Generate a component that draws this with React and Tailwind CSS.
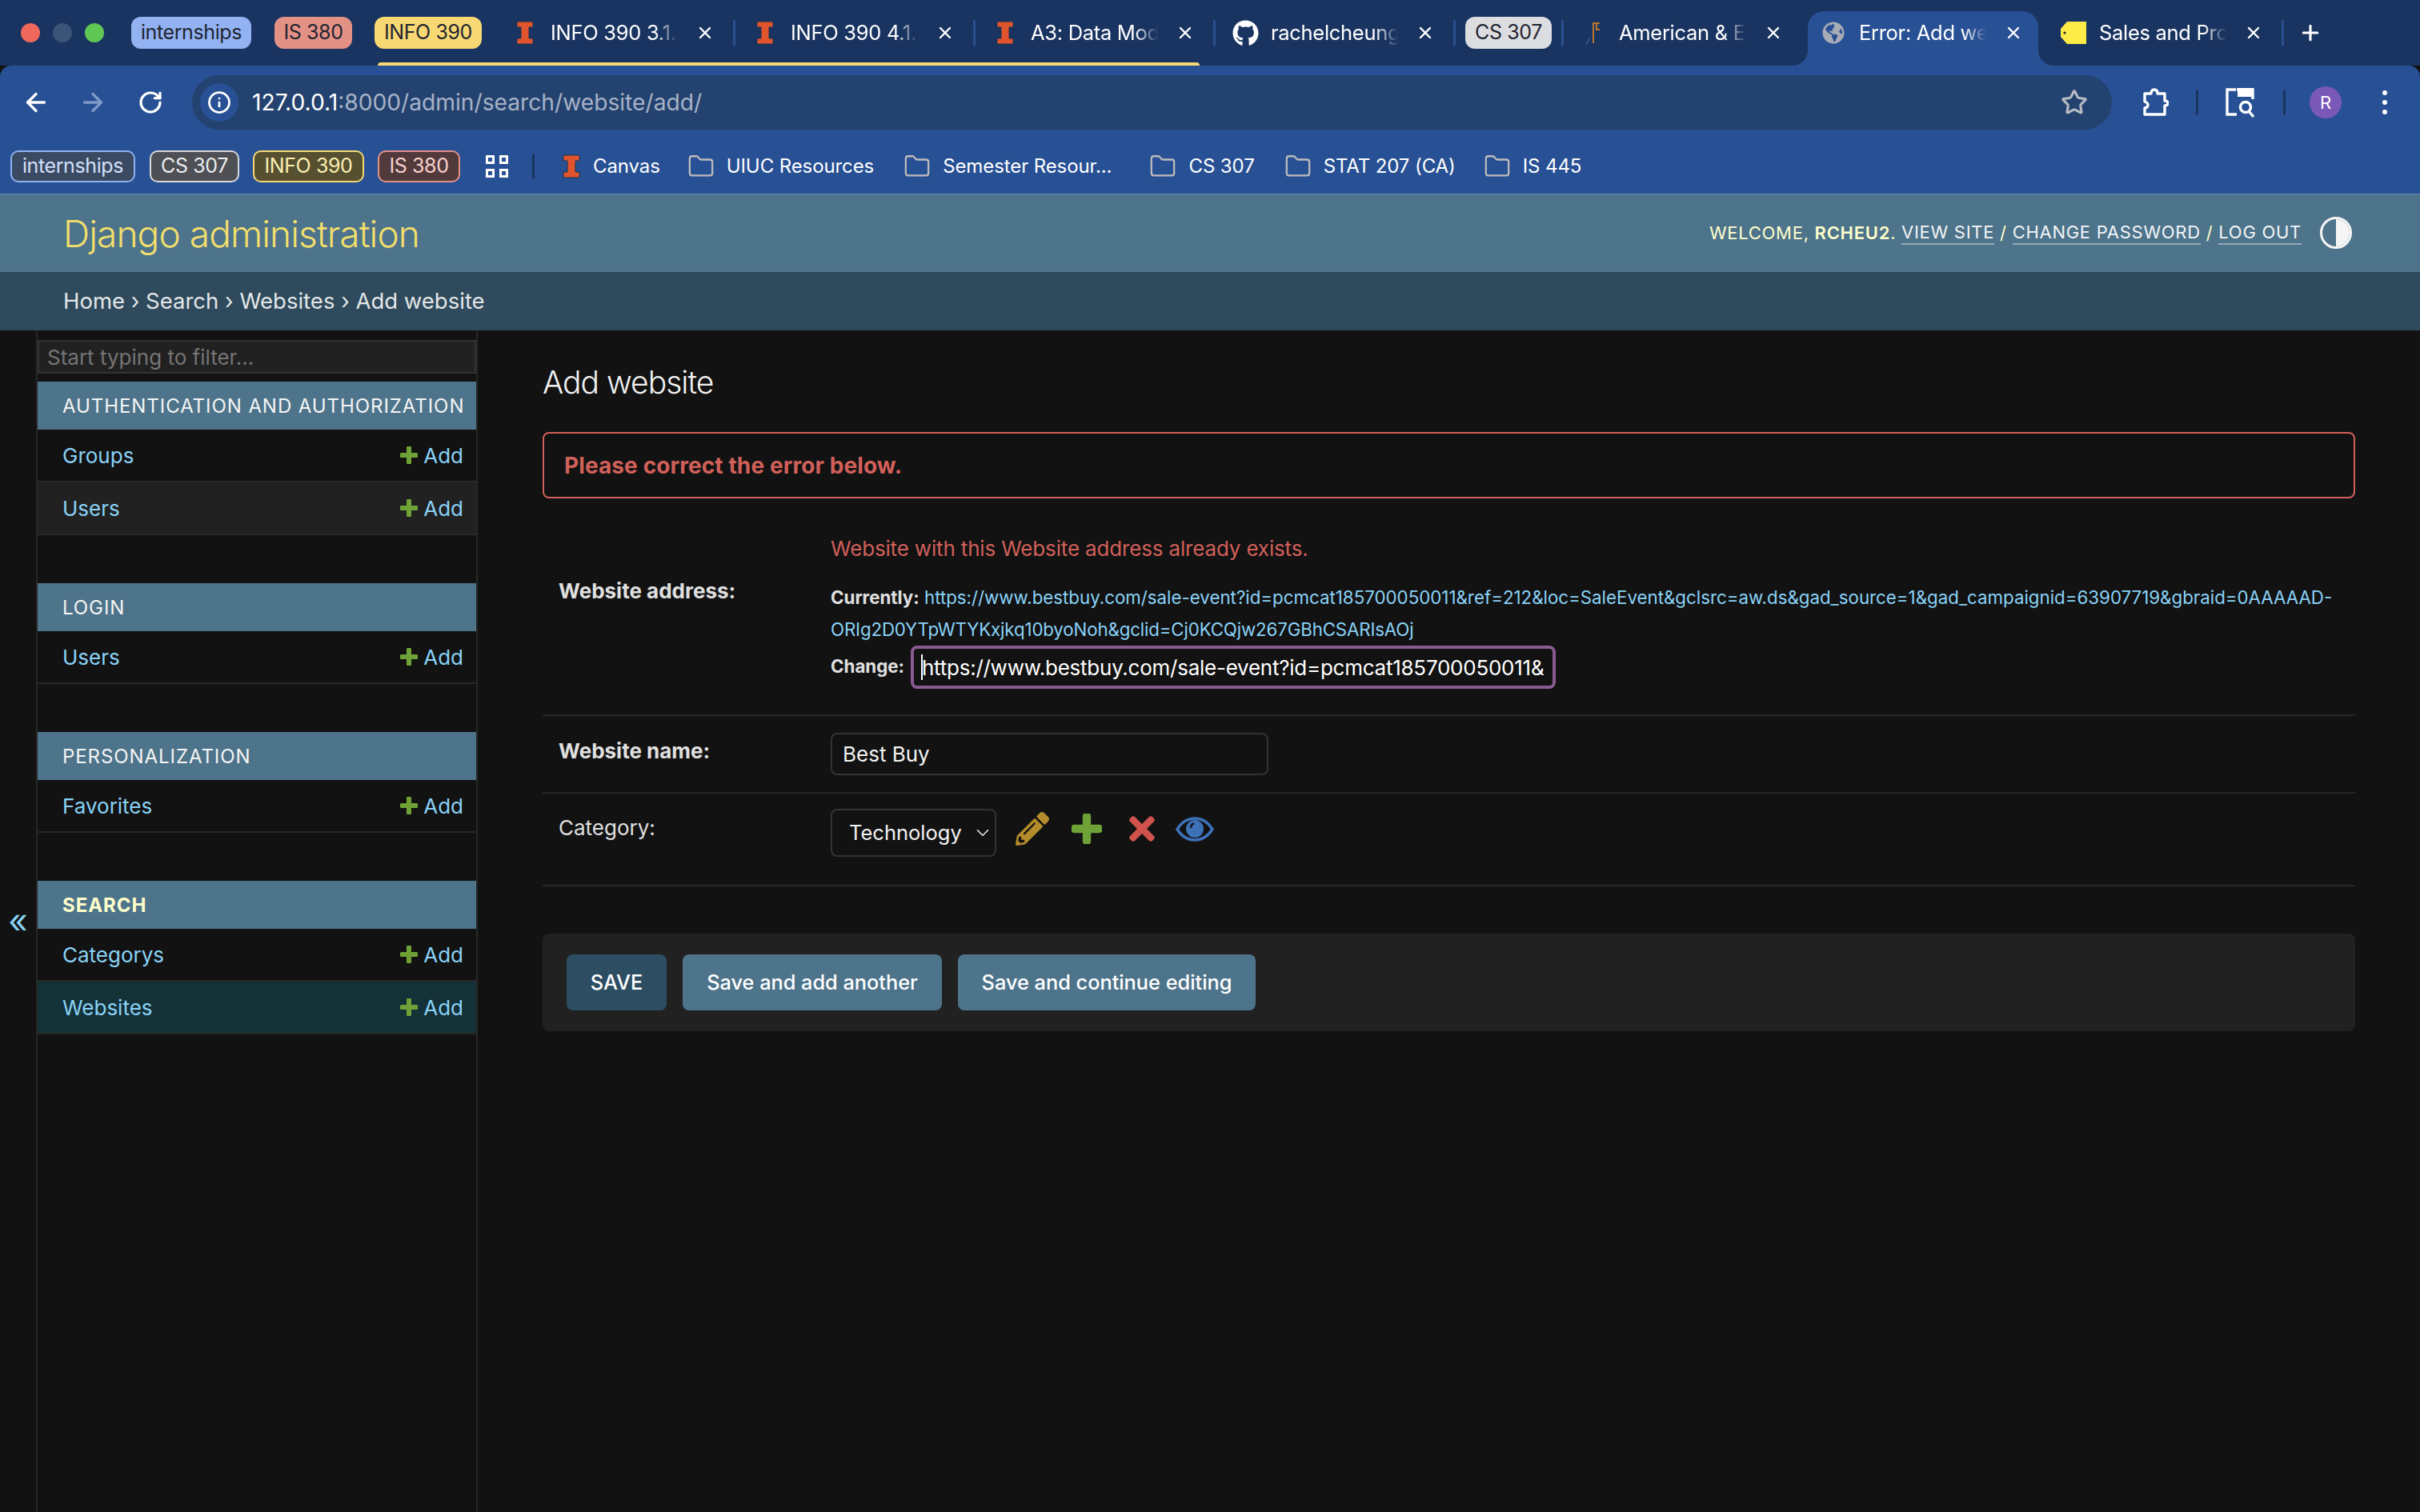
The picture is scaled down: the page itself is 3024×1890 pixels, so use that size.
import { ArrowLeft, ArrowRight, ChevronDown, Folder, Info, Plus, RotateCw, Star, X } from "lucide-react";
import { FaGithub, FaGlobeAmericas, FaPencilAlt, FaTimes } from "react-icons/fa";

// small favicons
const IllinoisI = ({ className = "" }) => (
  <svg viewBox="0 0 22 30" className={`w-[22px] h-[30px] shrink-0 ${className}`}>
    <path
      d="M1 1h20v7h-5v14h5v7H1v-7h5V8H1z"
      fill="#e0552e"
      stroke="#203050"
      strokeWidth="1"
    />
  </svg>
);

const TagIcon = () => (
  <svg viewBox="0 0 32 30" className="w-8 h-[30px] shrink-0">
    <path d="M8 1h24v28H8L0 20V10z" fill="#fdeb47" />
    <circle cx="5" cy="15" r="1.6" fill="#222" />
  </svg>
);

const AmericanIcon = () => (
  <svg viewBox="0 0 24 30" className="w-6 h-[30px] shrink-0">
    <path d="M12 28V3h8M12 3v25M16 3v8h4" fill="none" stroke="#b9752e" strokeWidth="2" />
    <path d="M3 29c2-2 3-3 4-7" fill="none" stroke="#3c5a86" strokeWidth="1.5" />
  </svg>
);

// django's green add icon, thick with rounded ends
const PlusIcon = ({ size }) => (
  <svg viewBox="0 0 22 22" style={{ width: size, height: size }} className="shrink-0">
    <path d="M11 2v18M2 11h18" stroke="#6fa236" strokeWidth="6" strokeLinecap="round" />
  </svg>
);

const Tab = ({ icon, title, active, sep = true }) => (
  <div className="relative flex items-center w-[298px] h-full shrink-0 pl-[25px]">
    {active && (
      <div className="absolute left-[5px] right-[5px] top-[14px] bottom-0 bg-[#285094] rounded-t-[20px]">
        <span className="absolute -left-5 bottom-0 w-5 h-5 bg-[radial-gradient(circle_at_0_0,transparent_20px,#285094_20.5px)]"></span>
        <span className="absolute -right-5 bottom-0 w-5 h-5 bg-[radial-gradient(circle_at_100%_0,transparent_20px,#285094_20.5px)]"></span>
      </div>
    )}
    <div className="relative flex items-center w-[24px] justify-center">{icon}</div>
    <span className="relative ml-5 w-[159px] overflow-hidden whitespace-nowrap text-[25.5px] tracking-[-0.3px] text-white [mask-image:linear-gradient(to_right,black_82%,transparent)]">
      {title}
    </span>
    <X className="relative ml-[22px] text-white" size={24} strokeWidth={2.4} />
    {sep && <span className="absolute -right-[2px] top-[25px] w-[3px] h-[33px] rounded bg-[#28508f]"></span>}
  </div>
);

const TabChip = ({ label, className, ml }) => (
  <div className={`flex items-center justify-center h-10 rounded-[12px] text-[25px] tracking-[-0.4px] text-[#1f2430] shrink-0 ${className} ${ml}`}>
    {label}
  </div>
);

const BarChip = ({ label, className }) => (
  <div className={`flex items-center justify-center h-10 rounded-[10px] border-2 text-[25px] tracking-[-0.4px] shrink-0 ${className}`}>
    {label}
  </div>
);

const Bookmark = ({ label, ml }) => (
  <div className={`flex items-center shrink-0 ${ml}`}>
    <Folder size={34} strokeWidth={1.6} className="text-[#bcbcbc]" />
    <span className="ml-[15px] text-[24px] tracking-[-0.1px] text-white whitespace-nowrap">{label}</span>
  </div>
);

const TabStrip = () => (
  <div className="flex items-center h-[82px] pl-[26px] bg-[#1a3461]">
    <span className="w-6 h-6 rounded-full bg-[#f0685c]"></span>
    <span className="w-6 h-6 ml-4 rounded-full bg-[#3b5478]"></span>
    <span className="w-6 h-6 ml-4 rounded-full bg-[#60c654]"></span>
    <TabChip label="internships" className="w-[150px] bg-[#92b2f2]" ml="ml-[34px]" />
    <TabChip label="IS 380" className="w-[97px] bg-[#e39185]" ml="ml-[29px]" />
    <div className="relative flex items-center h-full ml-7">
      <TabChip label="INFO 390" className="w-[134px] bg-[#f8d873]" ml="" />
      <div className="w-[17px]"></div>
      <Tab icon={<IllinoisI />} title="INFO 390 3.1.pdf" />
      <div className="w-[2px]"></div>
      <Tab icon={<IllinoisI />} title="INFO 390 4.1.pdf" />
      <div className="w-[2px]"></div>
      <Tab icon={<IllinoisI />} title="A3: Data Models" />
      <span className="absolute left-1 right-[18px] bottom-0 h-1 rounded-t bg-[#f8d873]"></span>
    </div>
    <div className="w-[2px]"></div>
    <Tab icon={<FaGithub className="text-white shrink-0" size={33} />} title="rachelcheungg" />
    <TabChip label="CS 307" className="w-[108px] bg-[#dcdde1]" ml="ml-[14px]" />
    <span className="w-[3px] h-[33px] ml-3 rounded bg-[#28508f]"></span>
    <Tab icon={<AmericanIcon />} title="American & Europe" sep={false} />
    <div className="w-[2px]"></div>
    <Tab icon={<FaGlobeAmericas className="text-[#a6abb5] shrink-0" size={28} />} title="Error: Add website" active sep={false} />
    <div className="w-[2px]"></div>
    <Tab icon={<TagIcon />} title="Sales and Promos" />
    <Plus className="ml-5 text-white shrink-0" size={30} strokeWidth={2.5} />
  </div>
);

const ToolbarDivider = () => <span className="block w-[3px] h-[32px] rounded bg-[#1a3461]"></span>;

const Toolbar = () => (
  <div className="bg-[#285094] rounded-t-[14px]">
    <div className="flex items-center h-[68px] mt-3">
      <ArrowLeft className="ml-[27px] text-white" size={36} strokeWidth={2.2} />
      <ArrowRight className="ml-[35px] text-[#7f9ac8]" size={36} strokeWidth={2.2} />
      <RotateCw className="ml-[38px] text-white" size={32} strokeWidth={2.4} />
      <div className="flex items-center w-[2399px] h-[68px] ml-[36px] pl-[10px] pr-[30px] rounded-full bg-[#24426f]">
        <div className="flex items-center justify-center w-12 h-12 rounded-full bg-[#285094]">
          <Info className="text-white" size={30} strokeWidth={2.2} />
        </div>
        <span className="ml-[17px] text-[28.200px] text-white">127.0.0.1</span>
        <span className="text-[28.200px] text-[#a7b3c7]">:8000/admin/search/website/add/</span>
        <Star className="ml-auto text-[#b6bbc4]" size={34} strokeWidth={2.2} />
      </div>
      <svg viewBox="0 0 34 36" className="w-[34px] h-9 ml-[37px]" fill="none" stroke="white" strokeWidth="3.4" strokeLinejoin="round">
        <path d="M4 7h8c0-3 1-5 4-5s4 2 4 5h9v9c2 0 4 1 4 3s-2 3-4 3v11H4v-8c3 0 4-2 4-4s-1-3-4-4z" />
      </svg>
      <div className="ml-[34px]"><ToolbarDivider /></div>
      <svg viewBox="0 0 38 40" className="w-[38px] h-10 ml-[33px]" fill="none">
        <path d="M14 4H3v31h12M15 4h20v12" stroke="white" strokeWidth="3.4" />
        <path d="M16 2h20v11H16z" fill="white" />
        <circle cx="26" cy="26" r="6.5" stroke="white" strokeWidth="3.4" />
        <path d="M30 31l6 7" stroke="white" strokeWidth="3.4" />
      </svg>
      <div className="ml-[35px]"><ToolbarDivider /></div>
      <div className="flex items-center justify-center w-10 h-10 ml-[30px] rounded-full bg-[#7a58b8] text-[22px] text-white">R</div>
      <div className="flex flex-col gap-[6px] ml-[51px]">
        <span className="w-[6px] h-[6px] rounded-full bg-white"></span>
        <span className="w-[6px] h-[6px] rounded-full bg-white"></span>
        <span className="w-[6px] h-[6px] rounded-full bg-white"></span>
      </div>
    </div>
    <div className="flex items-center h-10 mt-[26px] mb-[14px] pl-[13px]">
      <BarChip label="internships" className="w-[156px] border-[#8fb2f0] bg-[#3b4a63] text-[#d3e0fa]" />
      <BarChip label="CS 307" className="w-[112px] ml-[18px] border-[#d9d9d9] bg-[#4e5056] text-[#ececec]" />
      <BarChip label="INFO 390" className="w-[139px] ml-[17px] border-[#f6d872] bg-[#565030] text-[#fbeeb2]" />
      <BarChip label="IS 380" className="w-[103px] ml-[17px] border-[#e39185] bg-[#523a3c] text-[#f8d2cd]" />
      <div className="grid grid-cols-2 gap-[6px] ml-8 shrink-0">
        <span className="w-[11px] h-[11px] border-[3px] border-white"></span>
        <span className="w-[11px] h-[11px] border-[3px] border-white"></span>
        <span className="w-[11px] h-[11px] border-[3px] border-white"></span>
        <span className="w-[11px] h-[11px] border-[3px] border-white"></span>
      </div>
      <span className="w-[3px] h-[32px] ml-[30px] rounded bg-[#1a3461]"></span>
      <IllinoisI className="ml-[35px]" />
      <span className="ml-[16px] text-[24px] tracking-[-0.1px] text-white">Canvas</span>
      <Bookmark label="UIUC Resources" ml="ml-[34px]" />
      <Bookmark label="Semester Resour..." ml="ml-[37px]" />
      <Bookmark label="CS 307" ml="ml-[47px]" />
      <Bookmark label="STAT 207 (CA)" ml="ml-[37px]" />
      <Bookmark label="IS 445" ml="ml-[35px]" />
    </div>
  </div>
);

const Header = () => (
  <div className="flex items-center h-[98px] pl-[79px] pr-[85px] border-t-2 border-[#5b7da0] bg-[#4e748b]">
    <span className="text-[46px] font-light tracking-[-0.9px] text-[#f2df6b]">Django administration</span>
    <div className="flex items-center ml-auto pb-[2px] text-[22px] tracking-[0.72px] text-[#ffffcc]">
      <span>WELCOME,&nbsp;</span>
      <span className="font-semibold">RCHEU2</span>
      <span>.&nbsp;</span>
      <span className="border-b-2 border-[#93a9b8] text-[#f2f5f7] leading-[27px]">VIEW SITE</span>
      <span>&nbsp;/&nbsp;</span>
      <span className="border-b-2 border-[#93a9b8] text-[#f2f5f7] leading-[27px]">CHANGE PASSWORD</span>
      <span>&nbsp;/&nbsp;</span>
      <span className="border-b-2 border-[#93a9b8] text-[#f2f5f7] leading-[27px]">LOG OUT</span>
      <div className="flex w-10 h-10 ml-[23px] overflow-hidden rounded-full border-[3px] border-[#f5f5f5]">
        <span className="w-1/2"></span>
        <span className="w-1/2 bg-[#f5f5f5]"></span>
      </div>
    </div>
  </div>
);

const Breadcrumbs = () => (
  <div className="flex items-center h-[73px] pl-[79px] bg-[#2e4a5c] text-[27.500px] text-[#e3e6e8]">
    Home › Search › Websites › Add website
  </div>
);

const ModelRow = ({ name, alt, current }) => (
  <div
    className={`flex items-center justify-between h-[66px] pl-[31px] pr-[16px] border-b-2 border-[#272727] text-[26px] text-[#8ad3f7] ${
      current ? "bg-[#143137]" : alt ? "bg-[#212121]" : ""
    }`}
  >
    <span>{name}</span>
    <span className="flex items-center">
      <PlusIcon size={22} />
      <span className="ml-[7px]">Add</span>
    </span>
  </div>
);

const ModuleHead = ({ children, active }) => (
  <div
    className={`flex items-center h-[60px] pl-[31px] pt-[2px] bg-[#4e748b] text-[24px] tracking-[0.93px] ${
      active ? "font-bold text-[#ffffcc]" : "text-[#f5f5f5]"
    }`}
  >
    {children}
  </div>
);

const Sidebar = () => (
  <div className="flex shrink-0">
    <div className="flex items-center justify-center w-[45px] pb-[2px] text-[42px] text-[#8ad3f7]">«</div>
    <aside className="w-[552px] pt-3 border-x-2 border-[#272727]">
      <input
        placeholder="Start typing to filter..."
        className="block w-full h-[42px] pl-[10px] border-2 border-[#333333] bg-[#212121] text-[26px] placeholder:text-[#757575] outline-none"
      />
      <div className="mt-[10px] mb-[60px]">
        <ModuleHead>AUTHENTICATION AND AUTHORIZATION</ModuleHead>
        <ModelRow name="Groups" />
        <ModelRow name="Users" alt />
      </div>
      <div className="mb-[60px]">
        <ModuleHead>LOGIN</ModuleHead>
        <ModelRow name="Users" />
      </div>
      <div className="mb-[60px]">
        <ModuleHead>PERSONALIZATION</ModuleHead>
        <ModelRow name="Favorites" />
      </div>
      <div>
        <ModuleHead active>SEARCH</ModuleHead>
        <ModelRow name="Categorys" />
        <ModelRow name="Websites" current />
      </div>
    </aside>
  </div>
);

const SubmitBtn = ({ children, className }) => (
  <button className={`h-[70px] rounded-lg text-[25.300px] font-medium text-white ${className}`}>{children}</button>
);

const EyeIcon = () => (
  <svg viewBox="0 0 48 31" className="w-12 h-[31px]">
    <path d="M2 15.5C8 6 15 2 24 2s16 4 22 13.500C40 25 33 29 24 29S8 25 2 15.500z" fill="none" stroke="#3d71b8" strokeWidth="3.500" />
    <circle cx="24" cy="15" r="11" fill="#3d71b8" />
    <path d="M19 14c0-3 2-5 4-6" fill="none" stroke="#121212" strokeWidth="2.500" />
  </svg>
);

const MainForm = () => (
  <main className="flex-1 min-w-0 pt-[41px] pl-[81px] pr-[81px]">
    <h1 className="text-[39px] font-light leading-[48px] tracking-[-1px] text-[#f2f2f2]">Add website</h1>
    <div className="flex items-center h-[83px] mt-[38px] pl-[25px] border-2 border-[#d1605a] rounded-lg text-[28px] tracking-[0.1px] font-bold text-[#d1605a]">
      Please correct the error below.
    </div>

    <div className="pb-8 border-b-2 border-[#272727]">
      <p className="mt-[45px] mb-[23px] ml-[360px] text-[26px] tracking-[-0.16px] leading-[36px] text-[#d1605a]">Website with this Website address already exists.</p>
      <div className="flex pl-5">
        <label className="w-[340px] shrink-0 text-[26px] font-bold leading-[24px] text-[#e0e0e0]">Website address:</label>
        <div className="flex-1 min-w-0 text-[22.300px] leading-[40px]">
          <p className="whitespace-nowrap text-[#8ad3f7]">
            <b className="font-bold text-[#e0e0e0]">Currently:</b>{" "}
            https://www.bestbuy.com/sale-event?id=pcmcat185700050011&amp;ref=212&amp;loc=SaleEvent&amp;gclsrc=aw.ds&amp;gad_source=1&amp;gad_campaignid=63907719&amp;gbraid=0AAAAAD-
            <br />
            <span className="tracking-[-0.15px]">ORIg2D0YTpWTYKxjkq10byoNoh&amp;gclid=Cj0KCQjw267GBhCSARIsAOj</span>
          </p>
          <div className="flex items-center">
            <b className="w-[100px] shrink-0 -mt-[2px] font-bold text-[#e0e0e0]">Change:</b>
            <div className="relative">
              <input
                defaultValue="https://www.bestbuy.com/sale-event?id=pcmcat185700050011&"
                className="block w-[806px] h-[54px] pl-[10px] pr-[8px] border-[4px] border-[#8a5a93] rounded-lg bg-[#121212] text-[26px] tracking-[-0.25px] text-white outline-none"
              />
              <span className="absolute left-[13px] top-[11px] w-[2px] h-[32px] bg-white"></span>
            </div>
          </div>
        </div>
      </div>
    </div>

    <div className="flex items-center h-[97px] pl-5 border-b-2 border-[#272727]">
      <label className="w-[340px] shrink-0 pb-[8px] text-[26px] font-bold text-[#e0e0e0]">Website name:</label>
      <input
        defaultValue="Best Buy"
        className="w-[547px] h-[53px] pl-[13px] border-2 border-[#333333] rounded-lg bg-[#121212] text-[26px] text-[#f2f2f2] outline-none"
      />
    </div>

    <div className="flex items-start h-[116px] pt-[19px] pl-5 border-b-2 border-[#272727]">
      <label className="w-[340px] shrink-0 mt-[4px] text-[26px] text-[#e0e0e0]">Category:</label>
      <div className="relative shrink-0">
        <select className="block w-[207px] h-[60px] pl-[21px] border-2 border-[#333333] rounded-lg bg-[#121212] text-[25.500px] text-[#f2f2f2] appearance-none outline-none">
          <option>Technology</option>
        </select>
        <ChevronDown className="absolute right-[4px] top-[17px] text-[#e0e0e0]" size={26} strokeWidth={1.6} />
      </div>
      <div className="flex items-center h-[50px] ml-6">
        <FaPencilAlt className="text-[#b48c2c]" size={42} />
        <div className="ml-7"><PlusIcon size={38} /></div>
        <FaTimes className="ml-[27px] text-[#d0524d]" size={46} />
        <div className="ml-[19px]"><EyeIcon /></div>
      </div>
    </div>

    <div className="flex gap-5 mt-[59px] py-[26px] px-[30px] rounded-lg bg-[#212121]">
      <SubmitBtn className="w-[125px] bg-[#2d4d63]">SAVE</SubmitBtn>
      <SubmitBtn className="w-[324px] bg-[#4e748b]">Save and add another</SubmitBtn>
      <SubmitBtn className="w-[372px] bg-[#4e748b]">Save and continue editing</SubmitBtn>
    </div>
  </main>
);

export default function App() {
  return (
    <div className="flex flex-col h-screen overflow-hidden bg-[#121212] font-['Inter',sans-serif] text-[#eeeeee]">
      <TabStrip />
      <Toolbar />
      <Header />
      <Breadcrumbs />
      <div className="flex flex-1 min-h-0">
        <Sidebar />
        <MainForm />
      </div>
    </div>
  );
}
